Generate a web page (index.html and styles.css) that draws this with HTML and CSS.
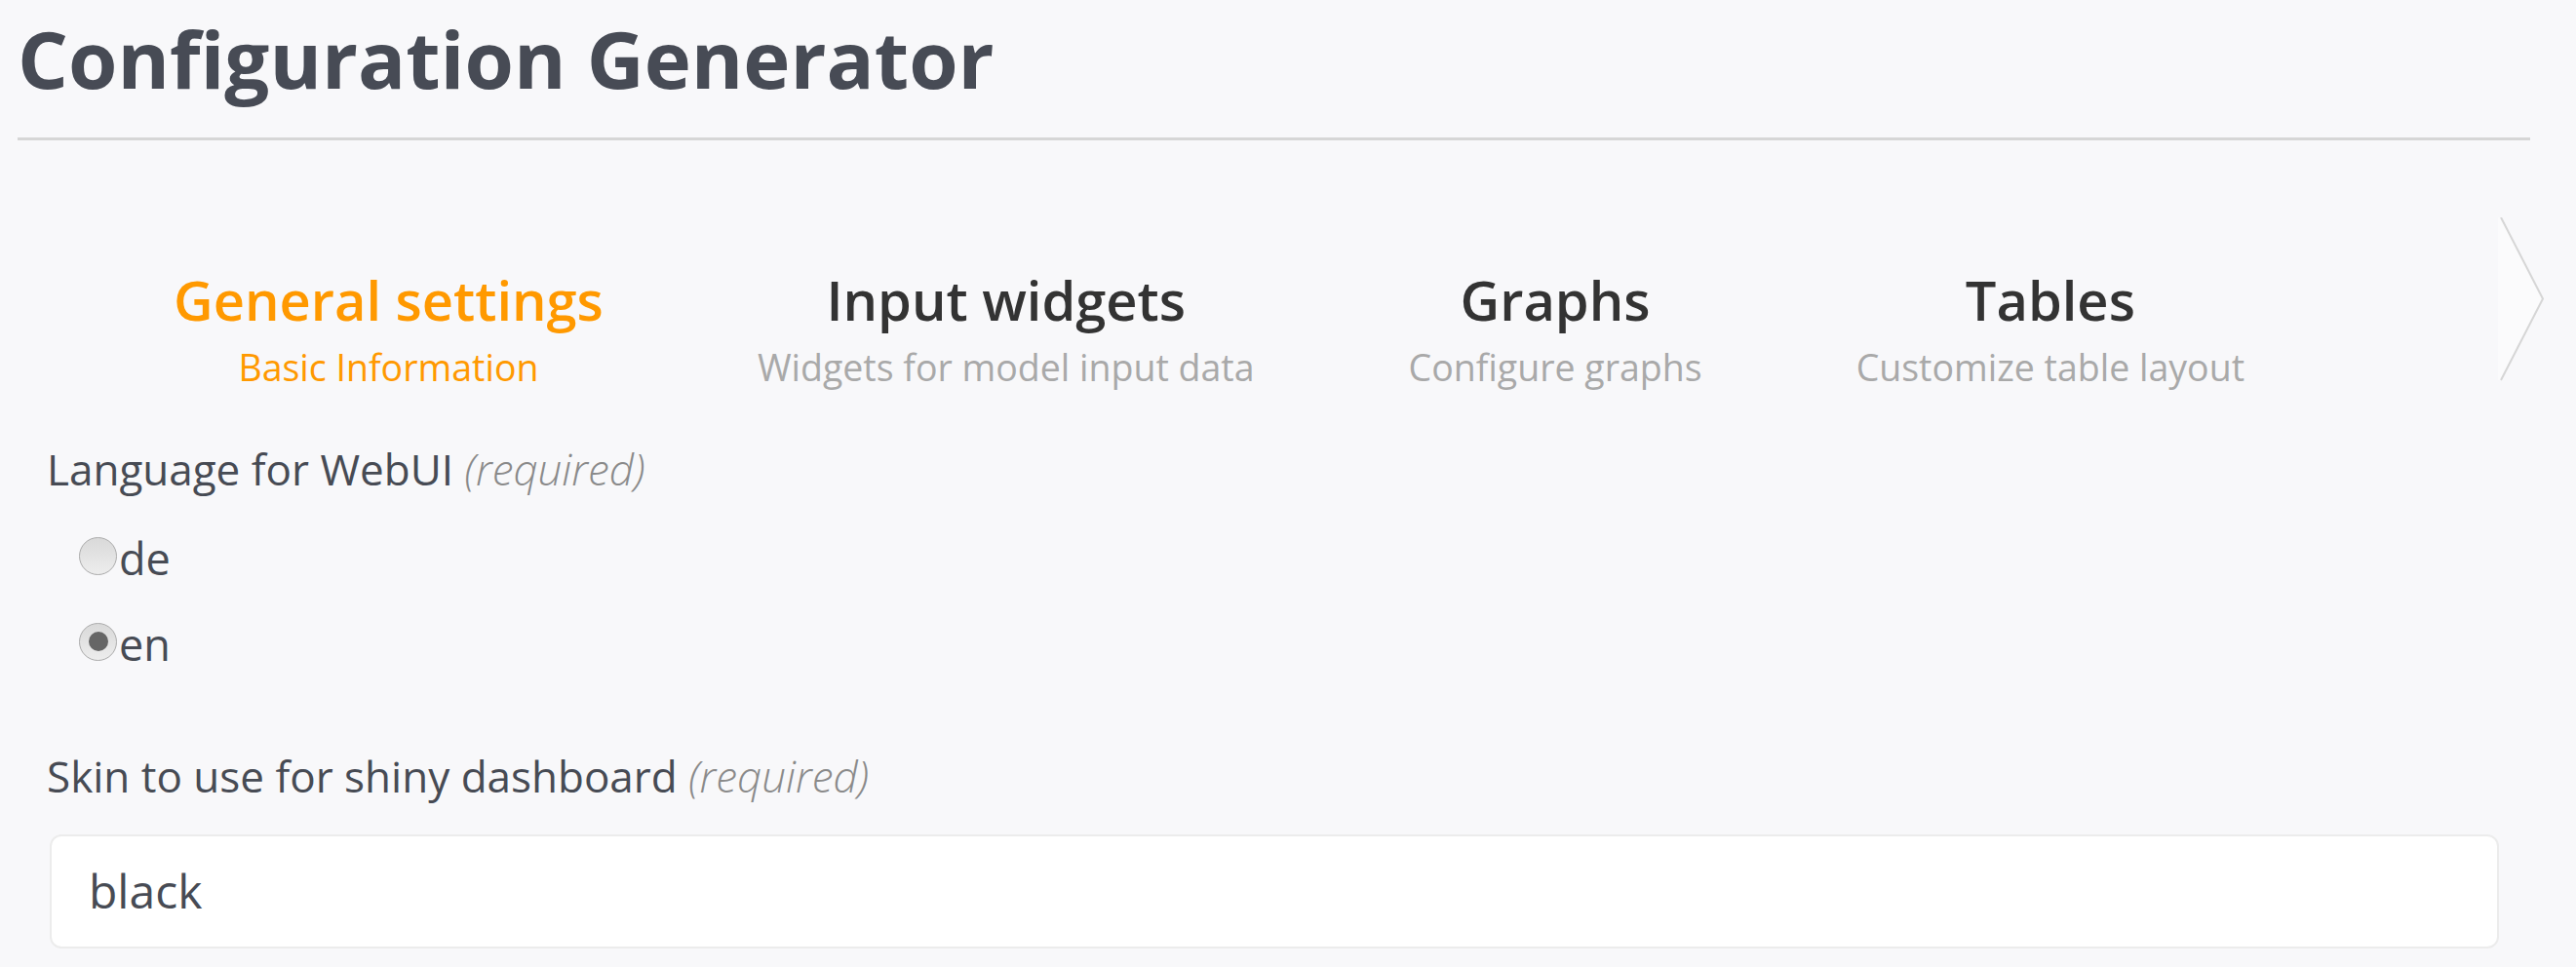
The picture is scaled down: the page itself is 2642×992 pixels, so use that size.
FILE: index.html
```
<!DOCTYPE html>
<html lang="en">
<head>
<meta charset="utf-8">
<title>Configuration Generator</title>
<link rel="stylesheet" href="styles.css">
</head>
<body>
<div class="page">
  <h1 class="page-title">Configuration Generator</h1>
  <hr class="page-rule">
  <div class="steps-row">
    <ul class="steps">
      <li class="step step-active">
        <span class="step-title">General settings</span>
        <span class="step-sub">Basic Information</span>
      </li>
      <li class="step">
        <span class="step-title">Input widgets</span>
        <span class="step-sub">Widgets for model input data</span>
      </li>
      <li class="step">
        <span class="step-title">Graphs</span>
        <span class="step-sub">Configure graphs</span>
      </li>
      <li class="step">
        <span class="step-title">Tables</span>
        <span class="step-sub">Customize table layout</span>
      </li>
    </ul>
    <svg class="step-next" width="48" height="168" viewBox="0 0 48 168">
      <polygon points="0,0 3,0 46,83.5 3,167 0,167" fill="#fbfbfc"/>
      <polyline points="3,0 46,83.5 3,167" fill="none" stroke="#d6d6d6" stroke-width="2"/>
    </svg>
  </div>
  <div class="form">
    <div class="field-label">Language for WebUI <span class="req">(required)</span></div>
    <div class="radio-group">
      <div class="radio-row"><span class="radio"></span>de</div>
      <div class="radio-row"><span class="radio radio-checked"></span>en</div>
    </div>
    <div class="field-label field-label-2">Skin to use for shiny dashboard <span class="req">(required)</span></div>
    <div class="text-input">black</div>
  </div>
</div>
</body>
</html>
```
FILE: styles.css
```
html, body {
  margin: 0;
  padding: 0;
  background: #f8f8fa;
}
body {
  font-family: "Open Sans", "Liberation Sans", sans-serif;
  color: #474b54;
}
.page {
  padding: 0 32px 40px 18px;
}
.page-title {
  margin: 0;
  padding-top: 11px;
  font-size: 81.5px;
  line-height: 1.2;
  font-weight: 700;
  color: #474b55;
}
.page-rule {
  margin: 32px 15px 0 0;
  border: 0;
  height: 3px;
  background: #d6d6d6;
}
.steps-row {
  margin-top: 79px;
  display: flex;
  align-items: flex-start;
}
.steps {
  list-style: none;
  margin: 0;
  padding: 0 0 0 81px;
  display: flex;
}
.step {
  display: flex;
  flex-direction: column;
  align-items: center;
  padding: 51px 79px 0;
}
.step-title {
  font-size: 56px;
  line-height: 1.2;
  font-weight: 600;
  color: #333;
}
.step-sub {
  margin-top: 13px;
  font-size: 37.5px;
  line-height: 1.2;
  color: #a9a9a9;
}
.step-active .step-title,
.step-active .step-sub {
  color: #ff9900;
}
.step-next {
  margin-left: auto;
  display: block;
}
.form {
  padding: 0 47px 0 30px;
}
.field-label {
  margin-top: 56px;
  font-size: 44px;
  line-height: 1.2;
}
.req {
  font-style: italic;
  font-weight: 300;
  color: #8a8a8a;
}
.radio-group {
  margin-top: 38px;
  padding-left: 33px;
  display: flex;
  flex-direction: column;
  gap: 34px;
}
.radio-row {
  font-size: 45px;
  line-height: 1.2;
}
.radio {
  display: inline-block;
  box-sizing: border-box;
  width: 39px;
  height: 39px;
  margin-right: 2px;
  border: 1px solid #ababab;
  border-radius: 50%;
  background: linear-gradient(#d9d9d9, #ededed);
  vertical-align: baseline;
  position: relative;
}
.radio-checked::after {
  content: "";
  position: absolute;
  left: 9px;
  top: 8px;
  width: 20px;
  height: 20px;
  border-radius: 50%;
  background: #666;
}
.field-label-2 {
  margin-top: 82px;
}
.text-input {
  margin: 33px 0 0 3px;
  box-sizing: border-box;
  height: 117px;
  padding-left: 38px;
  display: flex;
  align-items: center;
  background: #fff;
  border: 2px solid #ececec;
  border-radius: 12px;
  font-size: 48px;
  line-height: 1.2;
  color: #474b54;
}
```
